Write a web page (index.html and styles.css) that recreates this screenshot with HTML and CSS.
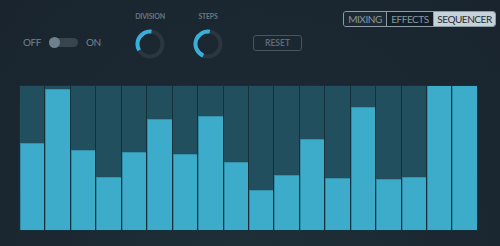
FILE: index.html
```html
<!DOCTYPE html>
<html>
<head>
<meta charset="utf-8">
<link rel="stylesheet" href="styles.css">
</head>
<body>
<div class="app">
  <div class="header">
    <div class="switch">
      <span class="sw-label sw-off">OFF</span>
      <span class="track"><span class="thumb"></span></span>
      <span class="sw-label sw-on">ON</span>
    </div>
    <div class="knob knob-division">
      <div class="knob-label">DIVISION</div>
      <svg width="30" height="30" viewBox="0 0 30 30">
        <circle cx="15" cy="15" r="12.5" class="ring"/>
        <circle cx="15" cy="15" r="12.5" class="arc" stroke-dasharray="27.5 100" transform="rotate(150 15 15)"/>
      </svg>
    </div>
    <div class="knob knob-steps">
      <div class="knob-label">STEPS</div>
      <svg width="30" height="30" viewBox="0 0 30 30">
        <circle cx="15" cy="15" r="12.5" class="ring"/>
        <circle cx="15" cy="15" r="12.5" class="arc" stroke-dasharray="36 100" transform="rotate(112 15 15)"/>
      </svg>
    </div>
    <button class="reset">RESET</button>
    <div class="tabs">
      <span class="tab tab-mixing">MIXING</span>
      <span class="tab tab-effects">EFFECTS</span>
      <span class="tab tab-active">SEQUENCER</span>
    </div>
  </div>
  <div class="grid">
    <div class="col"><div class="fill" style="height:87px"></div></div>
    <div class="col"><div class="fill" style="height:141px"></div></div>
    <div class="col"><div class="fill" style="height:80px"></div></div>
    <div class="col"><div class="fill" style="height:53px"></div></div>
    <div class="col"><div class="fill" style="height:78px"></div></div>
    <div class="col"><div class="fill" style="height:111px"></div></div>
    <div class="col"><div class="fill" style="height:76px"></div></div>
    <div class="col"><div class="fill" style="height:114px"></div></div>
    <div class="col"><div class="fill" style="height:68px"></div></div>
    <div class="col"><div class="fill" style="height:40px"></div></div>
    <div class="col"><div class="fill" style="height:55px"></div></div>
    <div class="col"><div class="fill" style="height:91px"></div></div>
    <div class="col"><div class="fill" style="height:52px"></div></div>
    <div class="col"><div class="fill" style="height:123px"></div></div>
    <div class="col"><div class="fill" style="height:51px"></div></div>
    <div class="col"><div class="fill" style="height:53px"></div></div>
    <div class="col"><div class="fill full" style="height:144px"></div></div>
    <div class="col"><div class="fill full" style="height:144px"></div></div>
  </div>
</div>
</body>
</html>
```

FILE: styles.css
```css
html, body {
  margin: 0;
  padding: 0;
}
body {
  width: 500px;
  height: 246px;
  overflow: hidden;
  font-family: Lato, "Open Sans", "DejaVu Sans", sans-serif;
  background: #1a2530;
}
.app {
  width: 500px;
  height: 246px;
  background: radial-gradient(ellipse at 50% 110%, #1e3038 0%, #1b2832 55%, #19242e 100%);
}
.header {
  display: flex;
  align-items: flex-start;
  height: 85px;
  padding-left: 23px;
  box-sizing: border-box;
}
.switch {
  display: flex;
  align-items: center;
  margin-top: 36px;
  height: 12px;
}
.sw-label {
  font-size: 10px;
  color: #74838d;
  letter-spacing: -0.4px;
  white-space: nowrap;
}
.sw-off { width: 15px; }
.sw-on { width: 14px; }
.track {
  position: relative;
  width: 29px;
  height: 9px;
  border-radius: 5px;
  background: #39454e;
  margin: 0 8px 0 11px;
}
.thumb {
  position: absolute;
  left: 0;
  top: -1px;
  width: 11px;
  height: 11px;
  border-radius: 50%;
  background: #6e818c;
}
.knob {
  display: flex;
  flex-direction: column;
  align-items: center;
  margin-top: 12px;
  width: 30px;
}
.knob-division { margin-left: 35px; }
.knob-steps { margin-left: 28px; }
.knob-label {
  font-size: 7px;
  font-weight: bold;
  color: #68777f;
  height: 8px;
  line-height: 8px;
  white-space: nowrap;
  letter-spacing: -0.2px;
  margin-bottom: 9px;
}
.knob svg { display: block; }
.ring {
  fill: none;
  stroke: #2c363e;
  stroke-width: 4;
}
.arc {
  fill: none;
  stroke: #38afd8;
  stroke-width: 4;
}
.reset {
  margin-left: 30px;
  margin-top: 35px;
  width: 49px;
  height: 16px;
  padding: 0;
  background: transparent;
  border: 1px solid #46555f;
  border-radius: 3px;
  font-family: Lato, "Open Sans", sans-serif;
  font-size: 8.5px;
  font-weight: bold;
  color: #5c6b75;
  letter-spacing: 0px;
}
.tabs {
  display: flex;
  margin-left: 41px;
  margin-top: 11px;
  height: 16px;
  box-sizing: border-box;
  border: 1px solid #8d9ca5;
  border-radius: 3px;
  overflow: hidden;
}
.tab {
  display: flex;
  align-items: center;
  justify-content: center;
  font-size: 10px;
  letter-spacing: -0.45px;
  color: #8797a0;
  height: 100%;
  white-space: nowrap;
}
.tab-mixing {
  width: 42px;
  background: #1e2a33;
  border-right: 1px solid #8d9ca5;
}
.tab-effects {
  width: 46px;
  background: #131d26;
  border-right: 1px solid #8d9ca5;
}
.tab-active {
  width: 61px;
  background: #c6d2d9;
  color: #1f2c35;
}
.grid {
  display: flex;
  gap: 1px;
  margin-left: 19px;
  width: 459px;
  height: 146px;
  padding: 1px;
  box-sizing: border-box;
  background: #16303b;
}
.col {
  flex: 1;
  display: flex;
  flex-direction: column;
  justify-content: flex-end;
  background: #224f5e;
}
.fill {
  background: #3dabca;
  border-top: 1px solid #3391ad;
  border-left: 1px solid #2f8aa5;
  box-sizing: border-box;
}
.fill.full {
  border-top: none;
}
```
